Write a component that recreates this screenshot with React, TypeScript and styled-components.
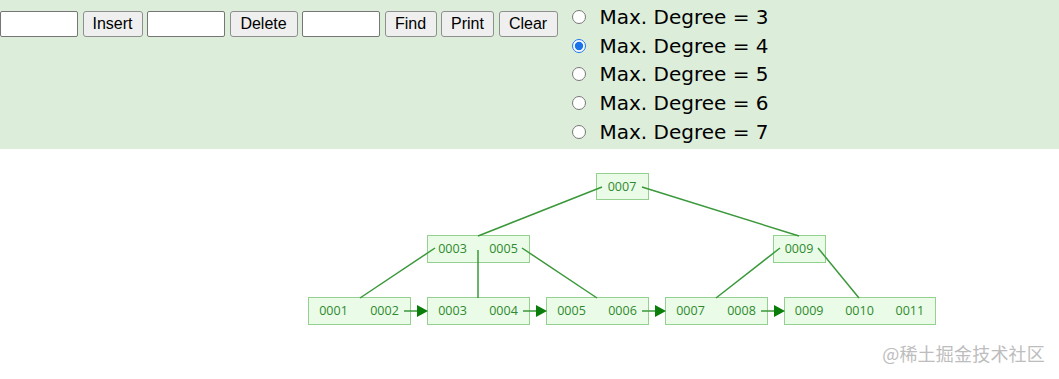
import React from "react";
import styled, { createGlobalStyle } from "styled-components";

const GlobalStyle = createGlobalStyle`
  html, body { margin: 0; padding: 0; background: #ffffff; }
  body { font-family: "Liberation Sans", Arial, sans-serif; }
`;

const Page = styled.div`
  position: relative;
  width: 1059px;
  height: 379px;
  overflow: hidden;
  background: #ffffff;
`;

const Panel = styled.div`
  display: flex;
  align-items: flex-start;
  height: 149px;
  background: #dcedda;
  box-sizing: border-box;
`;

const Controls = styled.div`
  display: flex;
  align-items: center;
  gap: 4.5px;
  padding-top: 11px;
`;

const TextField = styled.input`
  box-sizing: border-box;
  width: 78px;
  height: 26px;
  margin: 0;
  padding: 1px 2px;
  border: 1px solid #767676;
  border-radius: 2px;
  background: #ffffff;
  font: 16px "Liberation Sans", Arial, sans-serif;
`;

const Btn = styled.button<{ $w: number }>`
  box-sizing: border-box;
  width: ${(p) => p.$w}px;
  height: 26px;
  margin: 0;
  padding: 0;
  border: 1px solid #8f8f8f;
  border-radius: 3px;
  background: #efefef;
  color: #000;
  font: 16px "Liberation Sans", Arial, sans-serif;
  line-height: 24px;
  text-align: center;
`;

const RadioGroup = styled.div`
  display: flex;
  flex-direction: column;
  margin-left: 9px;
  padding-top: 2.5px;
`;

const RadioRow = styled.label`
  display: flex;
  align-items: center;
  height: 28.75px;
  font: 20px "DejaVu Sans", Verdana, sans-serif;
  color: #000;
`;

const Radio = styled.input`
  width: 14px;
  height: 14px;
  margin: 0 14px 0 5px;
  accent-color: #1a73e8;
`;

const Canvas = styled.svg`
  display: block;
`;

const Watermark = styled.div`
  position: absolute;
  right: 14px;
  bottom: 13px;
  font: 18px "Noto Sans CJK SC", sans-serif;
  color: #bdbdbd;
  letter-spacing: 0.2px;
`;

type TreeNode = { x: number; y: number; keys: string[]; h: number; w: number };

const nodes: TreeNode[] = [
  { x: 596, y: 173, keys: ["0007"], h: 26, w: 52 },
  { x: 427, y: 235, keys: ["0003", "0005"], h: 27, w: 102 },
  { x: 773, y: 235, keys: ["0009"], h: 27, w: 52 },
  { x: 308, y: 297, keys: ["0001", "0002"], h: 27, w: 102 },
  { x: 427, y: 297, keys: ["0003", "0004"], h: 27, w: 102 },
  { x: 546, y: 297, keys: ["0005", "0006"], h: 27, w: 102 },
  { x: 665, y: 297, keys: ["0007", "0008"], h: 27, w: 102 },
  { x: 784, y: 297, keys: ["0009", "0010", "0011"], h: 27, w: 151 },
];

const edges: [number, number, number, number][] = [
  [602, 187, 478, 236],
  [642, 187, 799, 236],
  [435, 248, 360, 298],
  [478, 250, 478, 298],
  [522, 248, 597, 298],
  [780, 248, 716, 298],
  [818, 248, 859, 298],
];

const arrows = [410, 529, 648, 767];

const LINE = "#3a983a";
const BOX_FILL = "#eafbe7";
const BOX_STROKE = "#94d08f";
const TEXT = "#2f8a2f";

const buttons: [string, number][] = [
  ["Find", 52],
  ["Print", 53],
  ["Clear", 59],
];

export default function App() {
  return (
    <>
      <GlobalStyle />
      <Page>
        <Panel>
          <Controls>
            <TextField type="text" />
            <Btn $w={60}>Insert</Btn>
            <TextField type="text" />
            <Btn $w={68}>Delete</Btn>
            <TextField type="text" />
            {buttons.map(([label, w]) => (
              <Btn key={label} $w={w}>
                {label}
              </Btn>
            ))}
          </Controls>
          <RadioGroup>
            {[3, 4, 5, 6, 7].map((d) => (
              <RadioRow key={d}>
                <Radio type="radio" name="degree" defaultChecked={d === 4} />
                Max. Degree = {d}
              </RadioRow>
            ))}
          </RadioGroup>
        </Panel>
        <Canvas width={1059} height={230} viewBox="0 149 1059 230">
          {nodes.map((n, i) => (
            <rect
              key={i}
              x={n.x + 0.5}
              y={n.y + 0.5}
              width={n.w}
              height={n.h}
              fill={BOX_FILL}
              stroke={BOX_STROKE}
              strokeWidth={1}
            />
          ))}
          {edges.map(([x1, y1, x2, y2], i) => (
            <line key={i} x1={x1} y1={y1} x2={x2} y2={y2} stroke={LINE} strokeWidth={1.5} />
          ))}
          {arrows.map((x, i) => (
            <g key={i}>
              <line x1={x - 6} y1={311} x2={x + 8} y2={311} stroke={LINE} strokeWidth={1.5} />
              <polygon points={`${x + 7},305 ${x + 7},317 ${x + 18},311`} fill="#0b7d0b" />
            </g>
          ))}
          {nodes.map((n, i) => {
            const cell = n.w / n.keys.length;
            return n.keys.map((k, j) => (
              <text
                key={`${i}-${j}`}
                x={n.x + j * cell + cell / 2}
                y={n.y + n.h / 2 + 4.5}
                textAnchor="middle"
                fill={TEXT}
                fontFamily="'Open Sans', 'DejaVu Sans', sans-serif"
                fontSize={12.5}
              >
                {k}
              </text>
            ));
          })}
        </Canvas>
        <Watermark>@稀土掘金技术社区</Watermark>
      </Page>
    </>
  );
}
